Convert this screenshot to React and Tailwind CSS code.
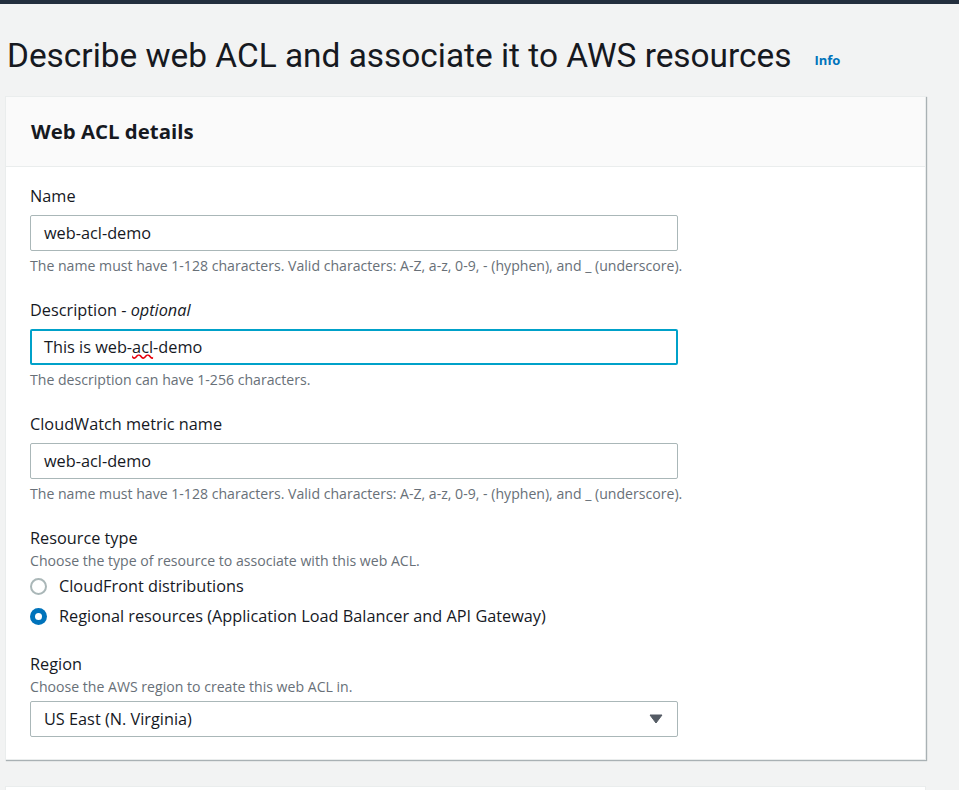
import React from 'react'

const Field = ({ label, optional, hint, value, focused }) => (
  <div className="flex flex-col">
    <div className="text-[16.3px] leading-[20px] text-[#16191f] h-[20px]">
      {label}
      {optional && <span> - <i>optional</i></span>}
    </div>
    <div
      className={
        'mt-[9px] w-[648px] h-[36px] rounded-[2px] bg-white flex items-center text-[16.3px] text-[#16191f] ' +
        (focused ? 'border-2 border-[#00a1c9] px-[12px]' : 'border border-[#aab7b8] px-[13px]')
      }
    >
      {value}
    </div>
    <div className="mt-[6px] text-[14.1px] leading-[18px] text-[#687078]">{hint}</div>
  </div>
)

const Radio = ({ checked, label }) => (
  <div className="flex flex-row items-center h-[30px]">
    {checked ? (
      <span className="w-[17px] h-[17px] rounded-full bg-[#0073bb] flex items-center justify-center">
        <span className="w-[7px] h-[7px] rounded-full bg-white" />
      </span>
    ) : (
      <span className="w-[17px] h-[17px] rounded-full border-2 border-[#aab7b8] bg-white" />
    )}
    <span className="ml-[12px] text-[16.3px] text-[#16191f]">{label}</span>
  </div>
)

const App = () => {
  return (
    <div className="w-full min-h-[790px] bg-[#f2f3f3] font-['Open_Sans',sans-serif] overflow-hidden">
      <div className="h-[4px] bg-[#232f3e]" />
      <div className="pl-[5px]">
        <div className="flex flex-row items-end h-[92px] pb-[20px] pl-[2px]">
          <h1 className="font-['Roboto',sans-serif] text-[33.4px] leading-[40px] text-[#16191f]">
            Describe web ACL and associate it to AWS resources
          </h1>
          <span className="ml-[23px] mb-[6px] text-[13px] font-bold text-[#0073bb]">Info</span>
        </div>

        <div className="w-[921px] bg-white border border-[#eaeded] shadow-[1px_1px_1px_0_rgba(0,28,36,0.3)]">
          <div className="h-[70px] bg-[#fafafa] border-b border-[#eaeded] flex items-center px-[25px]">
            <h2 className="text-[20.4px] font-bold text-[#16191f]">Web ACL details</h2>
          </div>
          <div className="px-[24px] pt-[19px] pb-[22px] flex flex-col gap-[25px]">
            <Field
              label="Name"
              value="web-acl-demo"
              hint="The name must have 1-128 characters. Valid characters: A-Z, a-z, 0-9, - (hyphen), and _ (underscore)."
            />
            <Field
              label="Description"
              optional
              focused
              value={
                <span>
                  This is web-<span className="underline decoration-wavy decoration-red-600">acl</span>-demo
                </span>
              }
              hint="The description can have 1-256 characters."
            />
            <Field
              label="CloudWatch metric name"
              value="web-acl-demo"
              hint="The name must have 1-128 characters. Valid characters: A-Z, a-z, 0-9, - (hyphen), and _ (underscore)."
            />
            <div className="flex flex-col">
              <div className="text-[16.3px] leading-[20px] text-[#16191f]">Resource type</div>
              <div className="text-[14.1px] leading-[18px] text-[#687078] mt-[4px]">
                Choose the type of resource to associate with this web ACL.
              </div>
              <div className="mt-[1px]">
                <Radio label="CloudFront distributions" />
                <Radio checked label="Regional resources (Application Load Balancer and API Gateway)" />
              </div>
            </div>
            <div className="flex flex-col -mt-[2px]">
              <div className="text-[16.3px] leading-[20px] text-[#16191f]">Region</div>
              <div className="text-[14.1px] leading-[18px] text-[#687078] mt-[4px]">
                Choose the AWS region to create this web ACL in.
              </div>
              <div className="mt-[5px] w-[648px] h-[36px] rounded-[2px] border border-[#aab7b8] bg-white flex flex-row items-center justify-between pl-[13px] pr-[14px] text-[16.3px] text-[#16191f]">
                <span>US East (N. Virginia)</span>
                <svg width="14" height="10" viewBox="0 0 14 10">
                  <path d="M1 1 L13 1 L7 9 Z" fill="#545b64" stroke="#545b64" strokeLinejoin="round" />
                </svg>
              </div>
            </div>
          </div>
        </div>

        <div className="mt-[26px] w-[921px] h-[40px] bg-white border border-[#eaeded]" />
      </div>
    </div>
  )
}

export default App
